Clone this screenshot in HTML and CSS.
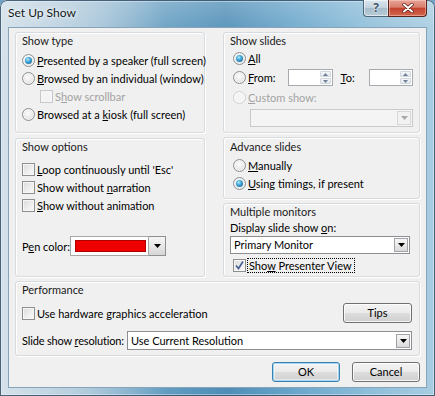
FILE: index.html
```html
<!DOCTYPE html>
<html>
<head>
<meta charset="utf-8">
<link rel="stylesheet" href="styles.css">
</head>
<body>
<div class="window">
  <div class="titlebar">
    <span class="title">Set Up Show</span>
    <div class="caption">
      <div class="cap-help">?</div>
      <div class="cap-close"><svg width="12" height="10" viewBox="0 0 12 10"><path d="M2 1.5 L10 8.5 M10 1.5 L2 8.5" stroke="#5a1a12" stroke-width="3.4" stroke-linecap="round"/><path d="M2 1.5 L10 8.5 M10 1.5 L2 8.5" stroke="#fff" stroke-width="2" stroke-linecap="round"/></svg></div>
    </div>
  </div>
  <div class="client">
    <div class="top">
      <div class="col col-left">
        <div class="group g-showtype">
          <div class="glabel">Show type</div>
          <div class="rows r-showtype">
            <div class="row"><span class="radio checked"></span><span><u>P</u>resented by a speaker (full screen)</span></div>
            <div class="row"><span class="radio"></span><span><u>B</u>rowsed by an individual (window)</span></div>
            <div class="row indent disabled"><span class="check dis"></span><span>S<u>h</u>ow scrollbar</span></div>
            <div class="row"><span class="radio"></span><span>Browsed at a <u>k</u>iosk (full screen)</span></div>
          </div>
        </div>
        <div class="group g-options">
          <div class="glabel">Show options</div>
          <div class="rows r-options">
            <div class="row"><span class="check"></span><span><u>L</u>oop continuously until 'Esc'</span></div>
            <div class="row"><span class="check"></span><span>Show without <u>n</u>arration</span></div>
            <div class="row"><span class="check"></span><span><u>S</u>how without animation</span></div>
          </div>
          <div class="pen-row">
            <span class="pen-label">P<u>e</u>n color:</span>
            <div class="pen-picker">
              <div class="pen-box"><div class="swatch"></div></div>
              <div class="pen-btn"><svg width="7" height="4" viewBox="0 0 7 4"><path d="M0 0 H7 L3.5 4 Z" fill="#000"/></svg></div>
            </div>
          </div>
        </div>
      </div>
      <div class="col col-right">
        <div class="group g-slides">
          <div class="glabel">Show slides</div>
          <div class="rows r-slides">
            <div class="row rrow"><span class="radio checked"></span><span><u>A</u>ll</span></div>
            <div class="row rrow from-row">
              <span class="radio"></span><span class="from-label"><u>F</u>rom:</span>
              <div class="spin"><div class="spin-btns"><span class="sb"><svg width="5" height="3" viewBox="0 0 5 3"><path d="M0 3 L2.5 0 L5 3Z" fill="#6d7f99"/></svg></span><span class="sb"><svg width="5" height="3" viewBox="0 0 5 3"><path d="M0 0 L2.5 3 L5 0Z" fill="#6d7f99"/></svg></span></div></div>
              <span class="to-label"><u>T</u>o:</span>
              <div class="spin"><div class="spin-btns"><span class="sb"><svg width="5" height="3" viewBox="0 0 5 3"><path d="M0 3 L2.5 0 L5 3Z" fill="#6d7f99"/></svg></span><span class="sb"><svg width="5" height="3" viewBox="0 0 5 3"><path d="M0 0 L2.5 3 L5 0Z" fill="#6d7f99"/></svg></span></div></div>
            </div>
            <div class="row rrow disabled"><span class="radio dis"></span><span><u>C</u>ustom show:</span></div>
          </div>
          <div class="combo combo-dis custom-combo"><div class="combo-btn"><svg width="7" height="4" viewBox="0 0 7 4"><path d="M0 0 H7 L3.5 4 Z" fill="#a9a9a9"/></svg></div></div>
        </div>
        <div class="group g-advance">
          <div class="glabel">Advance slides</div>
          <div class="rows r-advance">
            <div class="row rrow"><span class="radio"></span><span><u>M</u>anually</span></div>
            <div class="row rrow"><span class="radio checked"></span><span><u>U</u>sing timings, if present</span></div>
          </div>
        </div>
        <div class="group g-monitors">
          <div class="glabel">Multiple monitors</div>
          <div class="mon-label">Display slide show <u>o</u>n:</div>
          <div class="combo mon-combo"><span class="combo-text">Primary Monitor</span><div class="combo-btn"><svg width="7" height="4" viewBox="0 0 7 4"><path d="M0 0 H7 L3.5 4 Z" fill="#000"/></svg></div></div>
          <div class="row rrow presenter"><span class="check checked"><svg width="11" height="11" viewBox="0 0 11 11"><path d="M2 5.5 L4.5 8.5 L9 1.5" stroke="#4a6194" stroke-width="1.7" fill="none"/></svg></span><span class="focus">Sho<u>w</u> Presenter View</span></div>
        </div>
      </div>
    </div>
    <div class="group g-perf">
      <div class="glabel">Performance</div>
      <div class="perf-row">
        <div class="row"><span class="check"></span><span>Use hardware <u>g</u>raphics acceleration</span></div>
        <div class="btn tips-btn">Tips</div>
      </div>
      <div class="res-row">
        <span class="res-label">Slide show <u>r</u>esolution:</span>
        <div class="combo res-combo"><span class="combo-text">Use Current Resolution</span><div class="combo-btn"><svg width="7" height="4" viewBox="0 0 7 4"><path d="M0 0 H7 L3.5 4 Z" fill="#000"/></svg></div></div>
      </div>
    </div>
    <div class="footer">
      <div class="btn btn-default">OK</div>
      <div class="btn">Cancel</div>
    </div>
  </div>
</div>
</body>
</html>
```

FILE: styles.css
```css
* { box-sizing: border-box; }
html, body { margin: 0; padding: 0; }
body {
  width: 435px;
  height: 396px;
  overflow: hidden;
  font-family: Lato, "Open Sans", sans-serif;
  font-size: 11px;
  color: #000;
  background: #6fa3c6;
}
u { text-decoration: underline; text-underline-offset: 1px; }

.window {
  width: 435px;
  height: 396px;
  display: flex;
  flex-direction: column;
  border-radius: 7px 7px 0 0;
  background:
    linear-gradient(90deg, rgba(230,236,240,0.8) 0%, rgba(215,226,234,0.6) 18%, rgba(200,220,232,0) 38%, rgba(0,0,0,0) 100%),
    linear-gradient(180deg, rgba(255,255,255,0.25) 0px, rgba(255,255,255,0.1) 26px, rgba(255,255,255,0) 90px),
    linear-gradient(90deg, #8fb7d2 0%, #7fadcb 22%, #5c98be 42%, #4e8db6 52%, #6aa6cb 68%, #8cbdd9 84%, #a9cde2 100%);
  box-shadow: inset 0 0 0 1px rgba(35,65,90,0.8), inset 0 0 0 2px rgba(235,245,252,0.45);
}

.titlebar {
  height: 27px;
  display: flex;
  align-items: flex-start;
  justify-content: space-between;
  padding-left: 8px;
}
.title {
  margin-top: 5px;
  font-family: Lato, "Open Sans", sans-serif;
  font-size: 12px;
  line-height: 16px;
  color: #101820;
  text-shadow: 0 0 6px rgba(255,255,255,0.95), 0 0 3px rgba(255,255,255,0.9);
}
.caption {
  display: flex;
  margin-right: 8px;
}
.cap-help {
  width: 25px;
  height: 17px;
  border: 1px solid #4f6878;
  border-top: none;
  border-right: none;
  border-radius: 0 0 0 4px;
  background: linear-gradient(180deg, #dbe6ee 0%, #c3d3de 48%, #a7bccb 52%, #b8ccd8 100%);
  box-shadow: inset 0 0 0 1px rgba(255,255,255,0.55);
  text-align: center;
  font-family: "Open Sans", sans-serif;
  font-weight: 700;
  font-size: 12px;
  line-height: 16px;
  color: #3a5568;
  text-shadow: 0 0 2px #fff, 0 0 1px #fff;
}
.cap-close {
  width: 39px;
  height: 17px;
  border: 1px solid #5a231b;
  border-top: none;
  border-radius: 0 0 4px 0;
  background: linear-gradient(180deg, #e7a597 0%, #d87d6c 45%, #c3432e 52%, #d2674f 100%);
  box-shadow: inset 0 0 0 1px rgba(255,220,210,0.45);
  display: flex;
  align-items: center;
  justify-content: center;
}

.client {
  flex: 1;
  margin: 0 8px 8px 8px;
  background: #f0f0f0;
  border: 1px solid #86a3b8;
  padding: 4px 6px 0 6px;
  display: flex;
  flex-direction: column;
}
.top {
  display: flex;
  gap: 18px;
  height: 245px;
}
.col { display: flex; flex-direction: column; }
.col-left { width: 190px; }
.col-right { width: 197px; }

.group {
  border: 1px solid #d5dbdf;
  border-radius: 3px;
  box-shadow: inset 1px 1px 0 #fff, 1px 1px 0 #fff;
  padding: 0 6px;
}
.glabel {
  line-height: 15px;
  height: 15px;
  color: #1a1a1a;
}
.g-showtype { height: 101px; }
.g-options { height: 139px; margin-top: 5px; }
.g-slides { height: 101px; }
.g-advance { height: 62px; margin-top: 4px; padding-top: 1px; }
.g-monitors { height: 74px; margin-top: 4px; }
.g-perf { height: 75px; margin-top: 4px; padding-right: 7px; }

.rows { display: flex; flex-direction: column; }
.r-showtype { margin-top: 3px; }
.r-options { margin-top: 6px; }
.r-slides { margin-top: 1px; }
.r-advance { margin-top: 2px; }

.row {
  display: flex;
  align-items: center;
  gap: 2px;
  height: 18px;
  white-space: nowrap;
}
.rrow { padding-left: 3px; }
.indent { padding-left: 18px; }
.disabled { color: #a3a3a3; }

.radio {
  width: 13px;
  height: 13px;
  flex: none;
  border-radius: 50%;
  border: 1px solid #8a9094;
  background: radial-gradient(circle at 45% 40%, #fcfcfc 0%, #e8e8e8 55%, #d2d2d2 100%);
  box-shadow: inset 0 0 0 1px rgba(255,255,255,0.6);
  position: relative;
}
.radio.checked::after {
  content: "";
  position: absolute;
  left: 2px;
  top: 2px;
  width: 7px;
  height: 7px;
  border-radius: 50%;
  background: radial-gradient(circle at 40% 35%, #b7ecfb 0%, #3fa4d8 40%, #1b5a8a 100%);
}
.radio.dis {
  border-color: #cdd0d2;
  background: #f4f4f4;
}

.check {
  width: 13px;
  height: 13px;
  flex: none;
  border: 1px solid #8e8f8f;
  background: linear-gradient(135deg, #d9dadb 0%, #eeeeee 55%, #fbfbfb 100%);
  box-shadow: inset 0 0 0 1px #f6f6f6;
  display: flex;
  align-items: center;
  justify-content: center;
}
.check.dis {
  border-color: #c6c8ca;
  background: #f4f4f4;
}
.check.checked svg { display: block; }

.pen-row {
  margin-top: 22px;
  display: flex;
  align-items: center;
  height: 20px;
}
.pen-label { width: 48px; white-space: nowrap; }
.pen-picker { display: flex; height: 20px; }
.pen-box {
  width: 79px;
  height: 20px;
  border: 1px solid #a6a6a6;
  background: #fff;
  padding: 3px 3px 3px 4px;
}
.swatch {
  width: 71px;
  height: 12px;
  background: #ee0000;
  border: 1px solid #b00000;
}
.pen-btn {
  width: 17px;
  height: 20px;
  border: 1px solid #8f8f8f;
  border-left: none;
  background: linear-gradient(180deg, #f6f6f6 0%, #e7e7e7 50%, #d6d6d6 100%);
  display: flex;
  align-items: center;
  justify-content: center;
}

.from-row { height: 21px; }
.from-label { width: 41px; }
.to-label { width: 28px; margin-left: 6px; }
.spin {
  width: 47px;
  height: 17px;
  background: #fff;
  border: 1px solid #a7abb0;
  display: flex;
  justify-content: flex-end;
  padding: 1px;
}
.spin-btns {
  width: 11px;
  display: flex;
  flex-direction: column;
  gap: 1px;
}
.sb {
  flex: 1;
  background: linear-gradient(180deg, #f4f6f8 0%, #e3e8ec 100%);
  border: 1px solid #d0d6dc;
  border-radius: 1px;
  display: flex;
  align-items: center;
  justify-content: center;
}
.sb svg { display: block; }

.combo {
  height: 18px;
  background: #fff;
  border: 1px solid #8c8e91;
  display: flex;
  align-items: center;
  padding: 1px 1px 1px 3px;
}
.combo-text { line-height: 14px; white-space: nowrap; }
.combo-btn {
  margin-left: auto;
  width: 14px;
  height: 14px;
  flex: none;
  border: 1px solid #a0a4a8;
  background: linear-gradient(180deg, #f7f7f7 0%, #e9e9e9 50%, #d8d8d8 100%);
  display: flex;
  align-items: center;
  justify-content: center;
}
.combo-dis {
  background: #f4f4f4;
  border-color: #c8cbce;
}
.combo-dis .combo-btn {
  border-color: #d6d8da;
  background: #f2f2f2;
}
.custom-combo { width: 163px; margin-left: 20px; margin-top: 3px; }

.mon-label { line-height: 16px; height: 16px; margin-top: 1px; white-space: nowrap; }
.mon-combo { width: 180px; }
.presenter { margin-top: 2px; }
.focus {
  outline: 1px dotted #000;
  outline-offset: 0;
  padding: 0 2px 0 1px;
  line-height: 13px;
}

.perf-row {
  margin-top: 6px;
  height: 20px;
  display: flex;
  align-items: center;
  justify-content: space-between;
}
.btn {
  width: 68px;
  height: 20px;
  border: 1px solid #707070;
  border-radius: 3px;
  background: linear-gradient(180deg, #f3f3f3 0%, #ebebeb 48%, #dddddd 52%, #cfcfcf 100%);
  box-shadow: inset 0 0 0 1px rgba(255,255,255,0.8);
  text-align: center;
  line-height: 18px;
}
.tips-btn { width: 69px; }
.res-row {
  margin-top: 8px;
  display: flex;
  align-items: center;
  height: 19px;
}
.res-label { flex: none; white-space: nowrap; letter-spacing: -0.15px; margin-right: 3px; }
.res-combo { flex: 1; height: 19px; }

.footer {
  margin-top: 6px;
  display: flex;
  justify-content: flex-end;
  gap: 12px;
}
.btn-default {
  border-color: #3c7fb1;
  box-shadow: inset 0 0 0 1px #9fd7f2, inset 0 0 0 2px rgba(255,255,255,0.5);
}
```
